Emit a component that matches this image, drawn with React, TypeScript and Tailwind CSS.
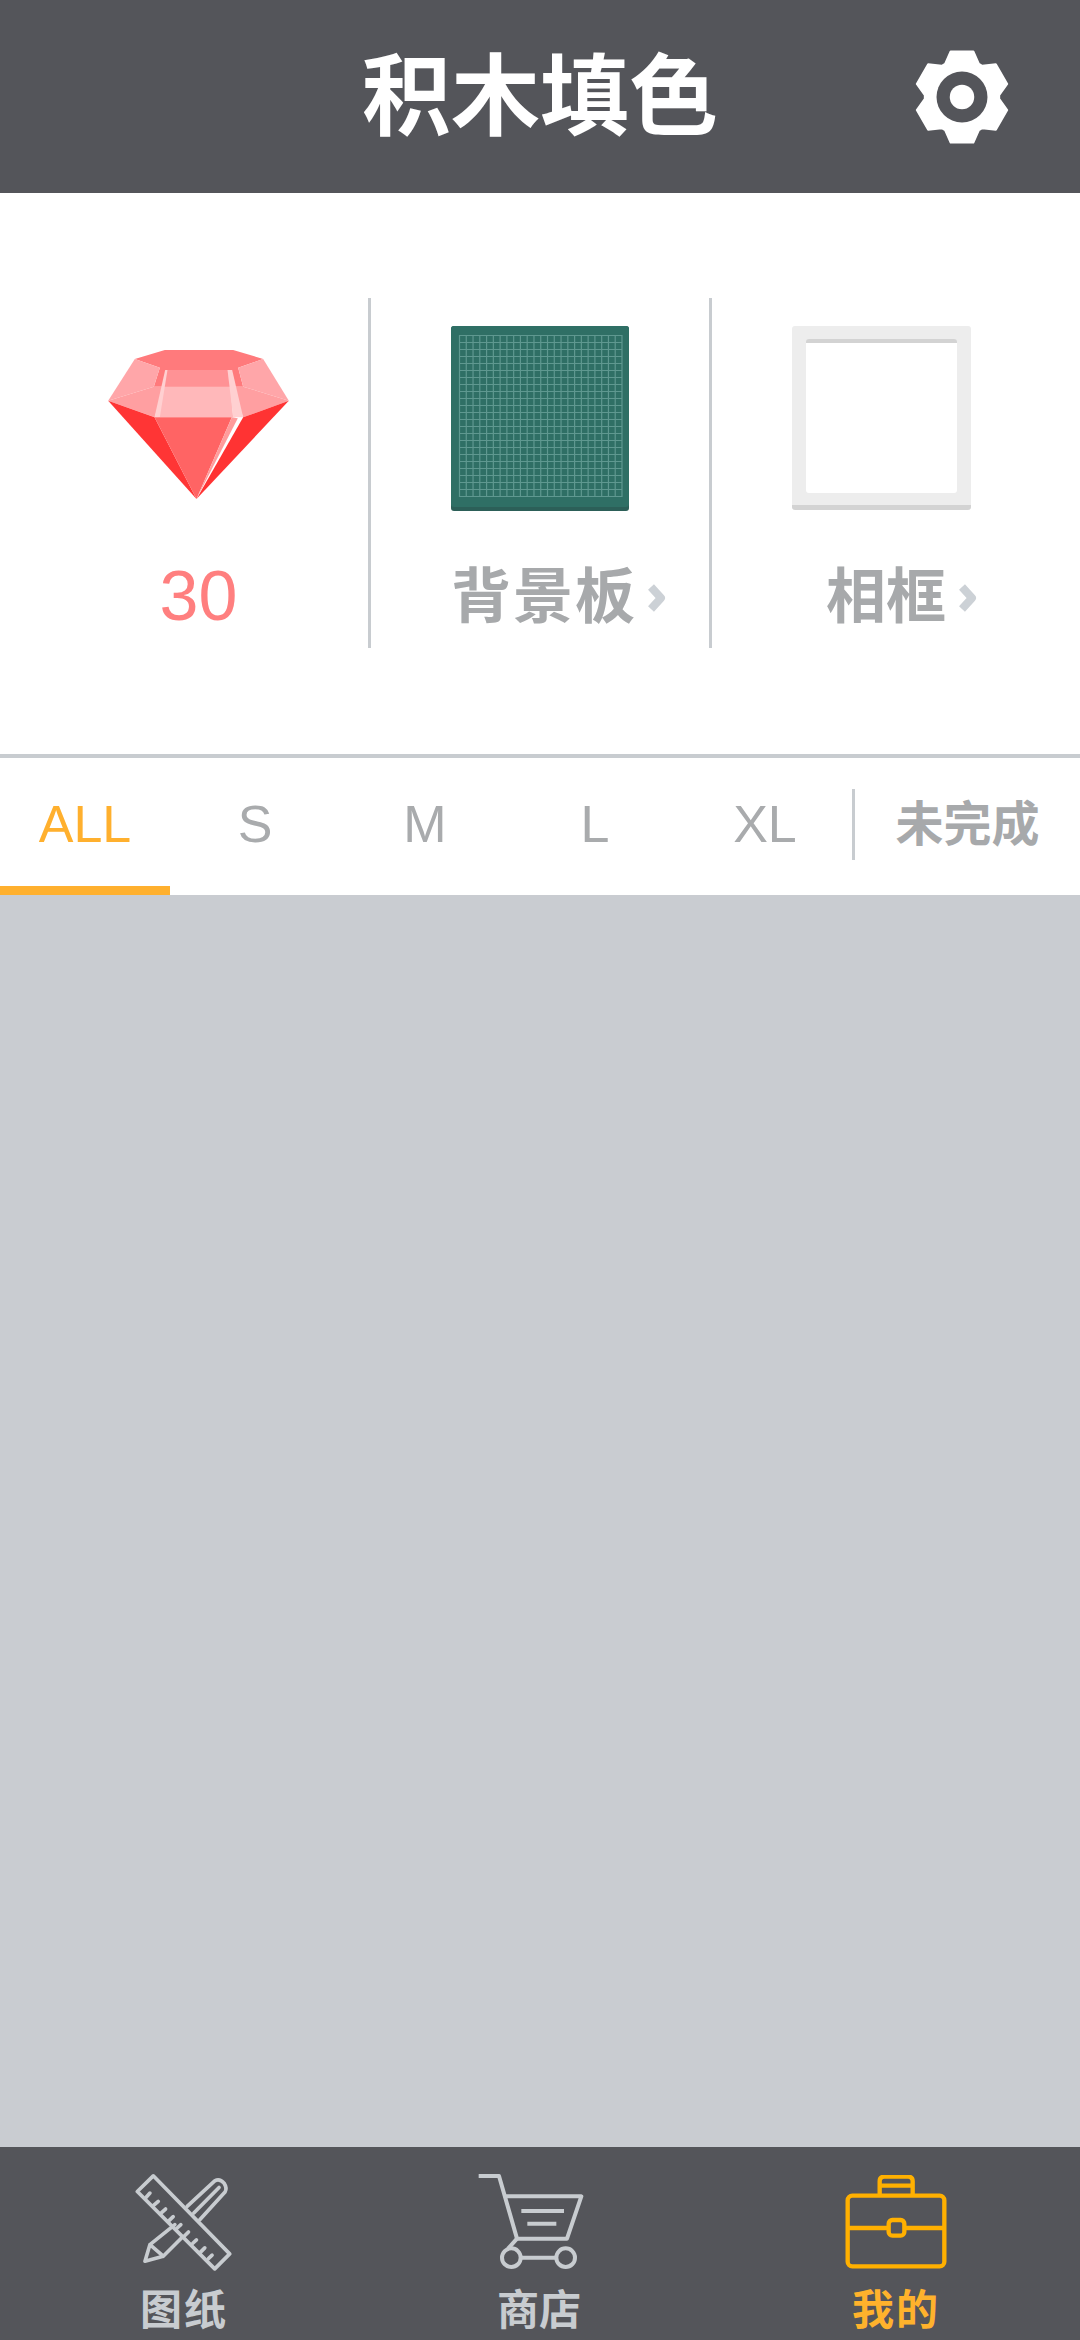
const tabs = ['ALL', 'S', 'M', 'L', 'XL'];

function gearPath() {
  const cx = 50;
  const cy = 50;
  const pts: string[] = [];
  for (let i = 0; i < 6; i++) {
    const a = -90 + i * 60;
    [
      [a - 27, 38],
      [a - 14, 48],
      [a + 14, 48],
      [a + 27, 38],
    ].forEach(([deg, r]) => {
      const rad = (deg * Math.PI) / 180;
      pts.push(`${(cx + r * Math.cos(rad)).toFixed(2)} ${(cy + r * Math.sin(rad)).toFixed(2)}`);
    });
  }
  return `M${pts.join('L')}Z`;
}

function Gear() {
  return (
    <svg width="98" height="98" viewBox="0 0 100 100">
      <path d={gearPath()} fill="#fff" stroke="#fff" strokeWidth="2" strokeLinejoin="round" />
      <circle cx="50" cy="50" r="26" fill="#54555a" />
      <circle cx="50" cy="50" r="12.5" fill="#fff" />
    </svg>
  );
}

function Gem() {
  return (
    <svg width="181" height="149" viewBox="145 150 542 447">
      <polygon points="225,177 315,150 520,150 610,177 535,203 550,260 282,260 300,203" fill="#ff7a7c" />
      <polygon points="225,177 300,203 282,260 145,302" fill="#ffa6a9" />
      <polygon points="610,177 535,203 550,260 687,302" fill="#ffa6a9" />
      <polygon points="320,210 505,210 515,260 310,260" fill="#ff9295" />
      <polygon points="145,302 282,260 310,260 285,352" fill="#ff9fa1" />
      <polygon points="687,302 550,260 515,260 550,352" fill="#ff9fa1" />
      <polygon points="310,260 512,260 520,352 296,352" fill="#ffb8ba" />
      <polygon points="316,210 323,210 300,352 284,352" fill="#ffd0d1" />
      <polygon points="503,210 517,210 550,352 520,352" fill="#ffd0d1" />
      <polygon points="145,302 284,352 410,597" fill="#ff3535" />
      <polygon points="687,302 550,352 410,597" fill="#ff3333" />
      <polygon points="284,352 516,352 410,597" fill="#ff6464" />
      <polygon points="516,352 534,355 410,597" fill="#ff9c9c" />
    </svg>
  );
}

function Board() {
  const cols = Array.from({ length: 25 }, (_, i) => i * 6.77);
  const rows = Array.from({ length: 24 }, (_, i) => i * 7);
  return (
    <svg width="178" height="185" viewBox="0 0 178 185" className="block">
      <rect width="178" height="185" rx="3" fill="#2c5f58" />
      <rect width="178" height="181" rx="3" fill="#2f6f65" />
      <g stroke="#5f9890" strokeWidth="1.2">
        {cols.map((x) => (
          <line key={x} x1={8.5 + x} y1="9" x2={8.5 + x} y2="171" />
        ))}
        {rows.map((y) => (
          <line key={y} x1="8" y1={9.5 + y} x2="171" y2={9.5 + y} />
        ))}
      </g>
    </svg>
  );
}

function Chevron() {
  return (
    <svg width="20" height="30" viewBox="0 0 20 30" className="shrink-0">
      <path d="M4 4 L14 15 L4 26" fill="none" stroke="#ccd1d6" strokeWidth="8" strokeLinejoin="round" />
    </svg>
  );
}

function RulerIcon() {
  return (
    <svg width="98" height="100" viewBox="105 95 295 300" fill="none" stroke="#c8ccd0" strokeWidth="11" strokeLinejoin="round" strokeLinecap="round">
      <polygon points="160,103 112,150 345,383 390,338" />
      <path d="M150 155L138 168M175 180L160 193M197 203L185 214M220 226L205 240M243 250L232 260M266 272L250 288M290 296L279 306M315 320L300 335M337 342L326 352" />
      <path d="M135 360L150 310L190 345ZM150 310L225 250M190 345L245 290" />
      <path d="M262 195L345 118Q360 110 373 125Q383 140 376 152L300 235M282 215L358 138" />
    </svg>
  );
}

function CartIcon() {
  return (
    <svg width="106" height="98" viewBox="115 98 318 294" fill="none" stroke="#c8ccd0" strokeWidth="12" strokeLinejoin="round">
      <path d="M117 107H178L232 295H382L425 168H195" />
      <path d="M245 212H373M263 250H350M243 352H350M232 295L205 325" />
      <circle cx="215" cy="352" r="28" />
      <circle cx="378" cy="352" r="28" />
    </svg>
  );
}

function CaseIcon() {
  return (
    <svg width="102" height="94" viewBox="135 103 304 282" fill="none" stroke="#ffb000" strokeWidth="13" strokeLinejoin="round">
      <rect x="142" y="165" width="290" height="212" rx="14" />
      <path d="M238 162V122Q238 108 252 108H323Q337 108 337 122V162M238 135H337" />
      <path d="M142 262H265M312 262H432" />
      <rect x="265" y="238" width="47" height="47" rx="11" />
    </svg>
  );
}

export default function App() {
  return (
    <div className="flex h-[2340px] w-[1080px] flex-col overflow-hidden bg-white font-['Liberation_Sans','Noto_Sans_CJK_SC',sans-serif]">
      {/* Header */}
      <header className="flex h-[193px] shrink-0 items-center bg-[#54555a]">
        <h1 className="ml-[360px] mt-[2px] w-[360px] text-center text-[89px] font-bold leading-none text-white">积木填色</h1>
        <div className="ml-[193px]">
          <Gear />
        </div>
      </header>

      {/* Stats */}
      <section className="flex h-[561px] shrink-0 pt-[105px]">
        <div className="h-[350px] w-[371px] border-r-[3px] border-[#c8ccd0] pl-[108px] pt-[52px]">
          <Gem />
          <div className="mt-[57px] w-[181px] text-center text-[70px] leading-[80px] text-[#ff7f7f]">30</div>
        </div>
        <div className="h-[350px] w-[341px] border-r-[3px] border-[#c8ccd0] pl-[80px] pt-[28px]">
          <Board />
          <div className="mt-[52px] flex items-center">
            <span className="text-[60px] font-bold leading-[70px] tracking-[2px] text-[#a7a9ab]">背景板</span>
            <span className="ml-[10px]">
              <Chevron />
            </span>
          </div>
        </div>
        <div className="h-[350px] flex-1 pl-[80px] pt-[28px]">
          <div className="h-[184px] w-[179px] rounded-[3px] border-b-[5px] border-[#d3d3d3] bg-[#ededed] px-[14px] pt-[13px]">
            <div className="h-[154px] rounded-[3px] border-t-[4px] border-[#d3d3d3] bg-white" />
          </div>
          <div className="mt-[53px] flex items-center pl-[34px]">
            <span className="text-[60px] font-bold leading-[70px] text-[#a7a9ab]">相框</span>
            <span className="ml-[12px]">
              <Chevron />
            </span>
          </div>
        </div>
      </section>

      {/* Tabs */}
      <nav className="flex h-[141px] shrink-0 items-stretch border-t-[4px] border-[#c8ccd0]">
        {tabs.map((tab, i) => (
          <div
            key={tab}
            className={`flex w-[170px] items-center justify-center border-b-[9px] pt-[3px] text-[52px] ${
              i === 0 ? 'border-[#ffb02e] text-[#ffb02e]' : 'border-transparent text-[#a9abad]'
            }`}
          >
            {tab}
          </div>
        ))}
        <div className="ml-[2px] mt-[31px] h-[71px] w-[3px] bg-[#c8ccd0]" />
        <div className="flex flex-1 items-center justify-center pb-[4px] text-[48px] font-bold text-[#a7a9ab]">未完成</div>
      </nav>

      {/* Empty list */}
      <main className="flex-1 bg-[#c9ccd1]" />

      {/* Bottom nav */}
      <footer className="flex h-[193px] shrink-0 bg-[#54555a] pt-[26px]">
        <div className="ml-[135px] flex w-[98px] flex-col items-center">
          <RulerIcon />
          <span className="mt-[13px] whitespace-nowrap text-[42px] font-bold leading-[50px] tracking-[2px] text-[#c8ccd0]">图纸</span>
        </div>
        <div className="ml-[245px] flex w-[106px] flex-col items-center">
          <CartIcon />
          <span className="ml-[16px] mt-[15px] whitespace-nowrap text-[42px] font-bold leading-[50px] text-[#c8ccd0]">商店</span>
        </div>
        <div className="ml-[261px] flex w-[102px] flex-col items-center pt-[2px]">
          <CaseIcon />
          <span className="mt-[17px] whitespace-nowrap text-[42px] font-bold leading-[50px] tracking-[2px] text-[#ffb22c]">我的</span>
        </div>
      </footer>
    </div>
  );
}
